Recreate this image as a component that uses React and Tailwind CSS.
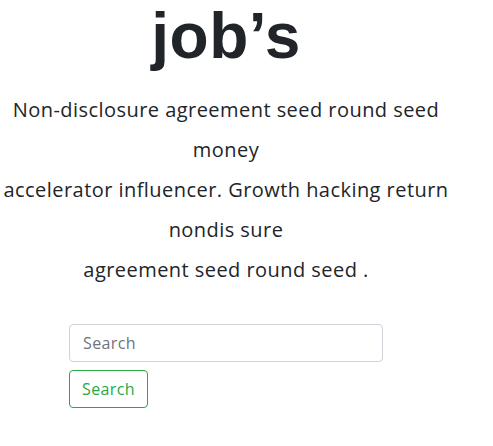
export default function App() {
  const lines = [
    "Non-disclosure agreement seed round seed",
    "money",
    "accelerator influencer. Growth hacking return",
    "nondis sure",
    "agreement seed round seed .",
  ];
  return (
    <div className="w-[452px] bg-white text-[#212529] font-['Open_Sans',sans-serif]">
      <h1 className="text-center font-['Liberation_Sans',sans-serif] text-[64px] font-bold leading-[72px] tracking-[0.5px]">job’s</h1>
      <div className="mt-[18px] text-center text-[20px] leading-[40px] tracking-[0.45px]">
        {lines.map((l, i) => (
          <div key={i}>{l}</div>
        ))}
      </div>
      <div className="mx-auto mt-[34px] w-[314px]">
        <input
          type="text"
          placeholder="Search"
          className="block h-[38px] w-full rounded-[4px] border border-[#ced4da] px-[13px] text-[16px] tracking-[0.4px] text-[#495057] placeholder:text-[#6c757d] outline-none"
        />
        <button className="mt-[8px] h-[38px] w-[79px] rounded-[4px] border border-[#28a745] text-[16px] tracking-[0.4px] text-[#28a745]">
          Search
        </button>
      </div>
    </div>
  );
}
